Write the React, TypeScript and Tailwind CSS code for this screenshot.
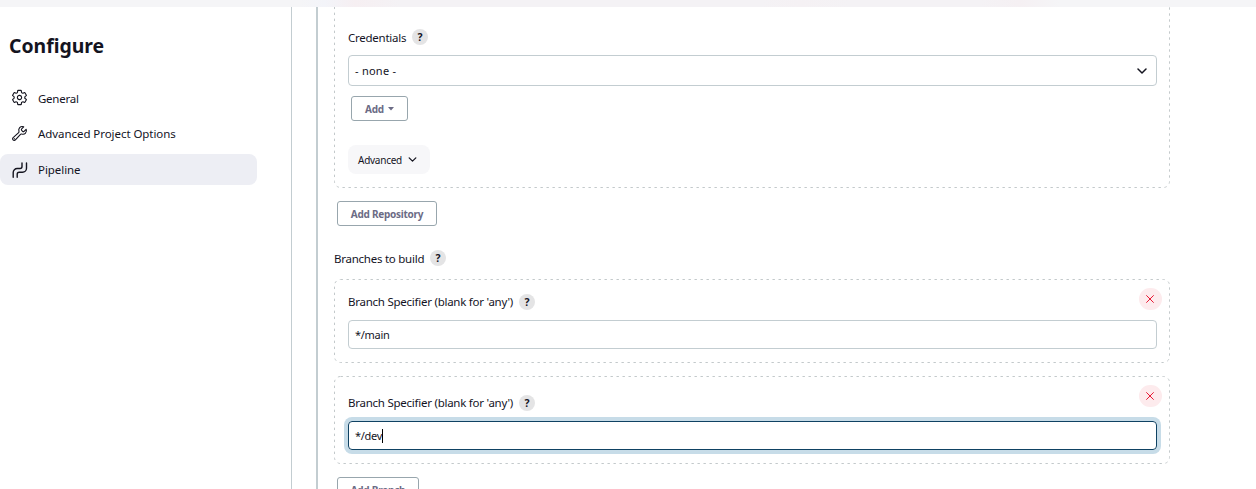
import React from "react";

function Help() {
  return (
    <span className="ml-[6px] flex h-4 w-4 shrink-0 items-center justify-center rounded-full bg-[#e4e4e5] text-[10.5px] font-bold leading-none text-[#14141f]">
      ?
    </span>
  );
}

function Label({ text, width }: { text: string; width: string }) {
  return (
    <div className="flex h-4 items-center">
      <span className={`${width} whitespace-nowrap text-[11.5px] leading-4 tracking-[-0.25px]`}>{text}</span>
      <Help />
    </div>
  );
}

function Chevron({ className }: { className: string }) {
  return (
    <svg viewBox="0 0 10 6" className={className} fill="none" stroke="currentColor" strokeWidth="1.5" strokeLinecap="round" strokeLinejoin="round">
      <path d="M1 1l4 4 4-4" />
    </svg>
  );
}

function Dashes() {
  return (
    <svg className="pointer-events-none absolute inset-0 h-full w-full" fill="none">
      <rect x="0.5" y="0.5" width="100%" height="100%" rx="6" stroke="#c3c9cb" strokeDasharray="2.4 3.6" style={{ width: "calc(100% - 1px)", height: "calc(100% - 1px)" }} />
    </svg>
  );
}

function RemoveButton() {
  return (
    <button className="flex h-[22px] w-[23px] items-center justify-center rounded-full bg-[#fdebed] pr-px text-[#e6001f]">
      <svg viewBox="0 0 8 8" className="h-2 w-2" fill="none" stroke="currentColor" strokeWidth="0.9">
        <path d="M0.3 0.3l7.4 7.4M7.7 0.3L0.3 7.7" />
      </svg>
    </button>
  );
}

const outline = "flex h-[25px] items-center justify-center rounded-[3px] border border-[#98a6ad] pt-[2px] text-[10px] font-bold tracking-[-0.25px] text-[#6b6b85] whitespace-nowrap";

export default function App() {
  return (
    <div className="flex h-[489px] w-[1256px] flex-col overflow-hidden bg-white font-['Noto_Sans','Open_Sans',sans-serif] text-[#14141f]">
      <div className="h-[7px] shrink-0 bg-[linear-gradient(90deg,#f5f5f7_0,#f5f5f7_300px,#f3f4f9_325px,#f6eff2_355px,#f4f2f5_400px,#f4f2f5_760px,#f5f1f4_800px,#f4f2f5_850px,#f4f2f5_980px,#f5f0f3_1020px,#f5f5f7_1060px)]" />
      <div className="flex min-h-0 flex-1">
        <aside className="w-[292px] shrink-0 border-r border-[#c3cdd1]">
          <h1 className="ml-[9px] mt-[25px] text-[19.4px] font-bold leading-[28px]">Configure</h1>
          <nav className="mt-[23px] text-[11.5px] tracking-[-0.06px]">
            <a className="flex h-[31px] items-center pl-[11px]">
              <svg viewBox="0 0 512 512" className="mr-[10px] h-[17px] w-[17px] -translate-y-px" fill="none" stroke="currentColor" strokeWidth="34" strokeLinecap="round" strokeLinejoin="round">
                <path d="M262.29 192.31a64 64 0 1057.4 57.4 64.13 64.13 0 00-57.4-57.4zM416.39 256a154.34 154.34 0 01-1.53 20.79l45.21 35.46a10.81 10.81 0 012.45 13.75l-42.77 74a10.81 10.81 0 01-13.14 4.59l-44.9-18.08a16.11 16.11 0 00-15.17 1.75A164.48 164.48 0 01325 400.8a15.94 15.94 0 00-8.82 12.14l-6.73 47.89a11.08 11.08 0 01-10.68 9.17h-85.54a11.11 11.11 0 01-10.69-8.87l-6.72-47.82a16.07 16.07 0 00-9-12.22 155.3 155.3 0 01-21.46-12.57 16 16 0 00-15.11-1.71l-44.89 18.07a10.81 10.81 0 01-13.14-4.58l-42.77-74a10.8 10.8 0 012.45-13.75l38.21-30a16.05 16.05 0 006-14.08c-.36-4.17-.58-8.33-.58-12.5s.21-8.27.58-12.35a16 16 0 00-6.07-13.94l-38.19-30A10.81 10.81 0 0149.48 186l42.77-74a10.81 10.81 0 0113.14-4.59l44.9 18.08a16.11 16.11 0 0015.17-1.75A164.48 164.48 0 01187 111.2a15.94 15.94 0 008.82-12.14l6.73-47.89A11.08 11.08 0 01213.23 42h85.54a11.11 11.11 0 0110.69 8.87l6.72 47.82a16.07 16.07 0 009 12.22 155.3 155.3 0 0121.46 12.57 16 16 0 0015.11 1.71l44.89-18.07a10.81 10.81 0 0113.14 4.58l42.77 74a10.8 10.8 0 01-2.45 13.75l-38.21 30a16.05 16.05 0 00-6.05 14.08c.33 4.14.55 8.3.55 12.47z" />
              </svg>
              <span className="tracking-[-0.25px]">General</span>
            </a>
            <a className="mt-[4px] flex h-[31px] items-center pl-[11px]">
              <svg viewBox="0 0 512 512" className="mr-[10px] h-[17px] w-[17px]" fill="none" stroke="currentColor" strokeWidth="34" strokeLinecap="round" strokeLinejoin="round">
                <path d="M393.87 190a32.1 32.1 0 01-45.25 0l-26.57-26.57a32.09 32.09 0 010-45.26L382.19 58a1 1 0 00-.3-1.64c-38.82-16.64-89.15-8.16-121.11 23.57-30.58 30.35-32.32 76-21.12 115.84a31.93 31.93 0 01-9.06 32.08L64 380a48.17 48.17 0 1068 68l153.86-167a31.93 31.93 0 0131.6-9.13c39.54 10.59 84.54 8.6 114.72-21.19 32.49-32 39.5-88.56 23.75-120.93a1 1 0 00-1.6-.26z" />
                <circle cx="96" cy="416" r="8" strokeWidth="16" />
              </svg>
              <span>Advanced Project Options</span>
            </a>
            <a className="mt-[5px] flex h-[31px] w-[257px] items-center rounded-lg bg-[#edeef4] pl-[12px]">
              <svg viewBox="0 0 16 16" className="mr-[10px] h-4 w-4" fill="none" stroke="currentColor" strokeWidth="1.4" strokeLinecap="round">
                <path d="M1.2 15.2V10.5a4 4 0 014-4H8a2 2 0 002-2V1M5.2 15.2v-3a2 2 0 012-2h3.3a4 4 0 004-4V1" />
              </svg>
              <span>Pipeline</span>
            </a>
          </nav>
        </aside>
        <main className="ml-6 flex flex-1 flex-col items-start border-l-2 border-[#c3cdd1] pl-4">
          <div className="h-[181px] w-[836px] shrink-0 overflow-hidden">
            <section className="relative -mt-2 h-[189px] pl-[14px] pr-[13px] pt-[30px]">
              <Dashes />
              <Label text="Credentials" width="w-[58px] translate-y-px" />
              <div className="mt-[10px] flex h-[31px] items-center justify-between rounded-[4px] border border-[#c3cdd1] pl-[6px] pr-[9px] text-[11px]">
                <span className="translate-y-px tracking-[0.25px]">- none -</span>
                <Chevron className="h-[6px] w-[10px]" />
              </div>
              <button className={`${outline} ml-[3px] mt-[10px] w-[57px]`}>
                Add
                <svg viewBox="0 0 6 4" className="ml-1 h-1 w-[6px] -translate-y-px" fill="currentColor"><path d="M0 0h6L3 3.5z" /></svg>
              </button>
              <button className="mt-6 flex h-[29px] w-[82px] items-center rounded-lg bg-[#f7f7f9] pl-[10px] text-[10px] tracking-[-0.25px]">
                <span className="w-[44px] translate-y-px text-left">Advanced</span>
                <Chevron className="ml-[6px] h-[5px] w-[9px]" />
              </button>
            </section>
          </div>
          <button className={`${outline} ml-[3px] mt-[13px] w-[100px] shrink-0`}>Add Repository</button>
          <div className="mt-[24px]"><Label text="Branches to build" width="w-[90px] translate-y-px" /></div>
          <section className="relative mt-[13px] h-[84px] w-[836px] shrink-0 pl-[14px] pr-[13px] pt-[15px]">
            <Dashes />
            <Label text="Branch Specifier (blank for 'any')" width="w-[165px]" />
            <div className="absolute right-[8px] top-[9px]"><RemoveButton /></div>
            <div className="mt-[10px] flex h-[29px] items-center rounded-[4px] border border-[#c3cdd1] pl-[6px] text-[11px] tracking-[-0.3px]">
              <span className="translate-y-px">*/main</span>
            </div>
          </section>
          <section className="relative mt-[13px] h-[88px] w-[836px] shrink-0 pl-[14px] pr-[13px] pt-[19px]">
            <Dashes />
            <Label text="Branch Specifier (blank for 'any')" width="w-[165px]" />
            <div className="absolute right-[8px] top-[9px]"><RemoveButton /></div>
            <div className="mt-[10px] flex h-[29px] items-center rounded-[4px] border border-[#0f4263] pl-[6px] text-[11px] tracking-[-0.3px] ring-4 ring-[#c7dce8]">
              <span className="translate-y-px">*/dev</span>
              <span className="h-[14px] w-px bg-black" />
            </div>
          </section>
          <button className={`${outline} ml-[3px] mt-[13px] w-[82px] shrink-0`}>Add Branch</button>
        </main>
      </div>
    </div>
  );
}
